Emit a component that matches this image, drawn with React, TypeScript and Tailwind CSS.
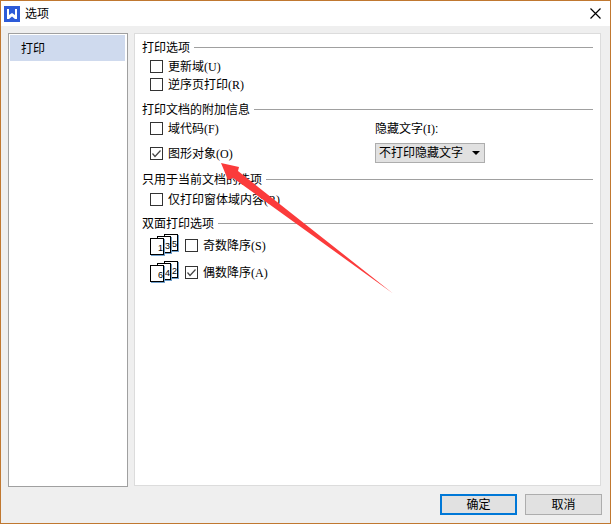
import React, {useState} from 'react';

interface CheckRowProps {
    label: string;
    hotkey: string;
    defaultChecked?: boolean;
    className?: string;
}

const Hotkey: React.FC<{ children: string }> = ({children}) => (
    <span className="font-['Liberation_Serif',serif]">({children})</span>
);

const CheckRow: React.FC<CheckRowProps> = ({label, hotkey, defaultChecked = false, className = 'h-[18px]'}) => {
    const [checked, setChecked] = useState(defaultChecked);

    return (
        <label className={`flex items-center gap-[5px] whitespace-nowrap ${className}`}>
            <span className="grid shrink-0">
                <input
                    type="checkbox"
                    checked={checked}
                    onChange={(e) => setChecked(e.target.checked)}
                    className="col-start-1 row-start-1 size-[13px] appearance-none border border-[#333333] bg-white"
                />
                {checked && (
                    <svg viewBox="0 0 13 13" className="pointer-events-none col-start-1 row-start-1 size-[13px]">
                        <path d="M2.5 6.5L5 9.5L10.5 3.5" fill="none" stroke="#444444" strokeWidth="1.2"/>
                    </svg>
                )}
            </span>
            <span className="pt-0.5">{label}<Hotkey>{hotkey}</Hotkey></span>
        </label>
    );
};

const SectionTitle: React.FC<{ children: string }> = ({children}) => (
    <h2 className="flex h-5 items-center gap-1 whitespace-nowrap">
        <span className="pt-0.5">{children}</span>
        <span className="h-px grow bg-[#a0a0a0]"/>
    </h2>
);

// Three overlapping sheets, the leftmost one in front
const PagesIcon: React.FC<{ digits: [string, string, string] }> = ({digits}) => (
    <svg viewBox="0 0 30 22" className="h-[22px] w-[30px] shrink-0" shapeRendering="crispEdges">
        {[2, 1, 0].map((i) => {
            const x = i * 7;
            const y = 4 - i * 2;
            return (
                <g key={i}>
                    <rect x={x + 1} y={y + 1} width="14" height="17" fill="#6f9fcb"/>
                    <rect x={x + 0.5} y={y + 0.5} width="13" height="16" fill="#ffffff" stroke="#000000"/>
                    <text x={x + 8} y={y + 13} fontSize="9" fontFamily="'Liberation Sans', sans-serif">
                        {digits[i]}
                    </text>
                </g>
            );
        })}
    </svg>
);

const App: React.FC = () => (
    <div
        className="flex min-h-screen flex-col border border-[#c07830] bg-[#efefef] font-['Liberation_Sans','Noto_Sans_CJK_SC',sans-serif] text-xs leading-[18px] text-black">
        <header className="flex h-[25px] items-center bg-white pr-[9px] pl-[3px]">
            <svg viewBox="0 0 16 16" className="size-4">
                <rect width="16" height="16" fill="#2d5bd8"/>
                <path d="M3 3h2v6l3-2 3 2V3h2v10h-2l-3-2.5L5 13H3z" fill="#ffffff"/>
            </svg>
            <h1 className="ml-[5px]">选项</h1>
            <button type="button" aria-label="关闭" className="ml-auto">
                <svg viewBox="0 0 11 11" className="size-[11px]">
                    <path d="M0.5 0.5L10.5 10.5M10.5 0.5L0.5 10.5" stroke="#000000" strokeWidth="1.2"/>
                </svg>
            </button>
        </header>

        <div className="flex grow gap-[6px] pt-[7px] pr-[9px] pl-[7px]">
            <nav className="w-[120px] shrink-0 border border-[#a0a0a0] bg-white py-px pr-0.5 pl-px">
                <button type="button" className="block h-[26px] w-full bg-[#cfdaee] px-[11px] pt-0.5 text-left">
                    打印
                </button>
            </nav>

            <main className="relative mb-px grow border border-[#dcdcdc] bg-white pt-[3px] pr-[7px] pl-[7px]">
                <section>
                    <SectionTitle>打印选项</SectionTitle>
                    <div className="pl-2">
                        <CheckRow label="更新域" hotkey="U"/>
                        <CheckRow label="逆序页打印" hotkey="R"/>
                    </div>
                </section>

                <section className="mt-[6px]">
                    <SectionTitle>打印文档的附加信息</SectionTitle>
                    <div className="grid grid-cols-[225px_1fr] pl-2">
                        <div className="flex flex-col gap-[6px]">
                            <CheckRow label="域代码" hotkey="F"/>
                            <CheckRow label="图形对象" hotkey="O" defaultChecked className="h-5"/>
                        </div>
                        <div className="flex flex-col items-start gap-[6px]">
                            <label htmlFor="hidden-text" className="h-[18px] pt-px">
                                隐藏文字<Hotkey>I</Hotkey>:
                            </label>
                            <div className="grid items-center">
                                <select
                                    id="hidden-text"
                                    className="col-start-1 row-start-1 h-5 w-[110px] appearance-none border border-[#adadad] bg-[#e1e1e1] pl-[3px]"
                                >
                                    <option>不打印隐藏文字</option>
                                    <option>打印隐藏文字</option>
                                </select>
                                <svg
                                    viewBox="0 0 8 4"
                                    className="pointer-events-none col-start-1 row-start-1 mr-[5px] h-1 w-2 justify-self-end"
                                >
                                    <path d="M0 0h8L4 4z"/>
                                </svg>
                            </div>
                        </div>
                    </div>
                </section>

                <section className="mt-[6px]">
                    <SectionTitle>只用于当前文档的选项</SectionTitle>
                    <div className="pl-2">
                        <CheckRow label="仅打印窗体域内容" hotkey="R" className="h-5"/>
                    </div>
                </section>

                <section className="mt-1">
                    <SectionTitle>双面打印选项</SectionTitle>
                    <div className="flex flex-col gap-[5px] pt-px pl-2">
                        <div className="flex items-center gap-[5px]">
                            <PagesIcon digits={['1', '3', '5']}/>
                            <CheckRow label="奇数降序" hotkey="S"/>
                        </div>
                        <div className="flex items-center gap-[5px]">
                            <PagesIcon digits={['6', '4', '2']}/>
                            <CheckRow label="偶数降序" hotkey="A" defaultChecked/>
                        </div>
                    </div>
                </section>

                {/* Pointer arrow drawn over the options */}
                <svg
                    viewBox="0 0 172 131"
                    className="pointer-events-none absolute top-[129px] left-[86px] h-[131px] w-[172px]"
                >
                    <path d="M0 0L18 4L17 8L172 130.5L12 15L7 17Z" fill="#fb3b3b"/>
                </svg>
            </main>
        </div>

        <footer className="flex justify-end gap-2 pt-[7px] pr-2 pb-2">
            <button type="button" className="h-[21px] w-[77px] border-2 border-[#0078d7] bg-[#e1e1e1] leading-4">
                确定
            </button>
            <button type="button" className="h-[21px] w-[77px] border border-[#adadad] bg-[#e1e1e1]">
                取消
            </button>
        </footer>
    </div>
);

export default App;
